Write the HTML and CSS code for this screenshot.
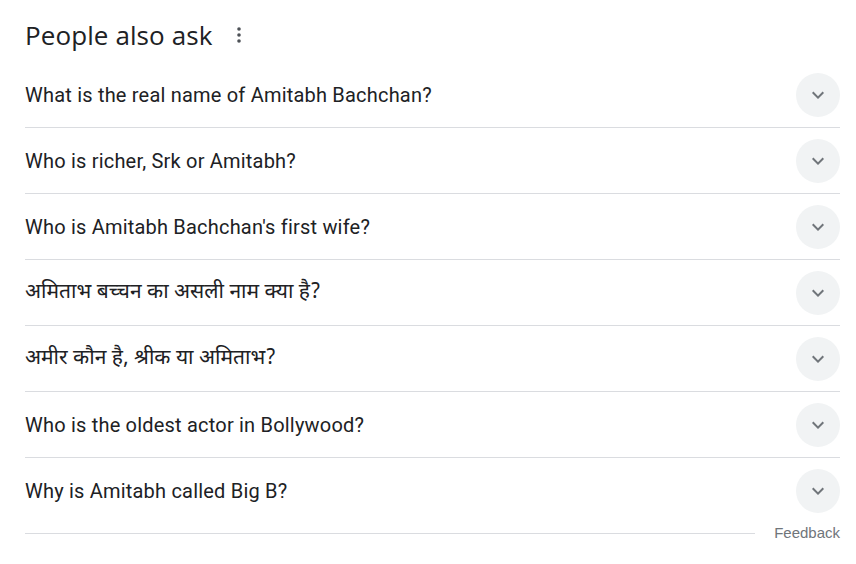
FILE: index.html
```html
<!DOCTYPE html>
<html lang="en">
<head>
<meta charset="utf-8">
<title>People also ask</title>
<link rel="stylesheet" href="styles.css">
</head>
<body>
<div class="paa">
  <div class="paa-head">
    <h2 class="paa-title">People also ask</h2>
    <span class="paa-more" aria-label="More options">
      <svg width="24" height="24" viewBox="0 0 24 24"><circle cx="12" cy="6" r="1.8"/><circle cx="12" cy="12" r="1.8"/><circle cx="12" cy="18" r="1.8"/></svg>
    </span>
  </div>
  <div class="paa-list">
    <div class="paa-row"><span class="q">What is the real name of Amitabh Bachchan?</span><span class="chev"><svg viewBox="0 0 24 24" width="24" height="24"><path d="M16.59 8.59 12 13.17 7.41 8.59 6 10l6 6 6-6z"/></svg></span></div>
    <div class="paa-row"><span class="q">Who is richer, Srk or Amitabh?</span><span class="chev"><svg viewBox="0 0 24 24" width="24" height="24"><path d="M16.59 8.59 12 13.17 7.41 8.59 6 10l6 6 6-6z"/></svg></span></div>
    <div class="paa-row"><span class="q">Who is Amitabh Bachchan's first wife?</span><span class="chev"><svg viewBox="0 0 24 24" width="24" height="24"><path d="M16.59 8.59 12 13.17 7.41 8.59 6 10l6 6 6-6z"/></svg></span></div>
    <div class="paa-row"><span class="q" lang="hi">अमिताभ बच्चन का असली नाम क्या है?</span><span class="chev"><svg viewBox="0 0 24 24" width="24" height="24"><path d="M16.59 8.59 12 13.17 7.41 8.59 6 10l6 6 6-6z"/></svg></span></div>
    <div class="paa-row"><span class="q" lang="hi">अमीर कौन है, श्रीक या अमिताभ?</span><span class="chev"><svg viewBox="0 0 24 24" width="24" height="24"><path d="M16.59 8.59 12 13.17 7.41 8.59 6 10l6 6 6-6z"/></svg></span></div>
    <div class="paa-row"><span class="q">Who is the oldest actor in Bollywood?</span><span class="chev"><svg viewBox="0 0 24 24" width="24" height="24"><path d="M16.59 8.59 12 13.17 7.41 8.59 6 10l6 6 6-6z"/></svg></span></div>
    <div class="paa-row last"><span class="q">Why is Amitabh called Big B?</span><span class="chev"><svg viewBox="0 0 24 24" width="24" height="24"><path d="M16.59 8.59 12 13.17 7.41 8.59 6 10l6 6 6-6z"/></svg></span></div>
  </div>
  <div class="paa-foot">
    <div class="foot-line"></div>
    <span class="feedback">Feedback</span>
  </div>
</div>
</body>
</html>
```
FILE: styles.css
```css
html, body {
  margin: 0;
  padding: 0;
  background: #fff;
}
body {
  font-family: Roboto, Arial, "Liberation Sans", sans-serif;
  color: #202124;
}
.paa {
  width: 815px;
  padding: 19px 0 0 25px;
}
.paa-head {
  display: flex;
  align-items: center;
  height: 32px;
  margin-bottom: 11px;
}
.paa-title {
  margin: 0;
  font-family: "Open Sans", Roboto, sans-serif;
  font-weight: 400;
  font-size: 26px;
  line-height: 32px;
  letter-spacing: 0.1px;
  color: #202124;
}
.paa-more {
  display: flex;
  margin-left: 14px;
  fill: #4d5156;
}
.paa-list {
  display: flex;
  flex-direction: column;
}
.paa-row {
  display: flex;
  align-items: center;
  justify-content: space-between;
  height: 65px;
  border-bottom: 1px solid #dadce0;
}
.paa-row.last {
  border-bottom: none;
}
.q {
  font-size: 20px;
  line-height: 28px;
  letter-spacing: 0.2px;
  color: #202124;
}
.q[lang="hi"] {
  font-family: "Noto Sans Devanagari", "Lohit Devanagari", "Noto Sans", sans-serif;
  font-size: 21px;
  letter-spacing: 0;
}
.chev {
  width: 44px;
  height: 44px;
  border-radius: 50%;
  background: #f1f3f4;
  display: flex;
  align-items: center;
  justify-content: center;
  fill: #70757a;
}
.paa-foot {
  display: flex;
  align-items: center;
  height: 18px;
  margin-top: 1px;
}
.foot-line {
  flex: 1;
  height: 1px;
  background: #dadce0;
  margin-right: 19px;
}
.feedback {
  font-family: "Liberation Sans", Arial, sans-serif;
  font-size: 15px;
  color: #70757a;
  line-height: 18px;
}
```
